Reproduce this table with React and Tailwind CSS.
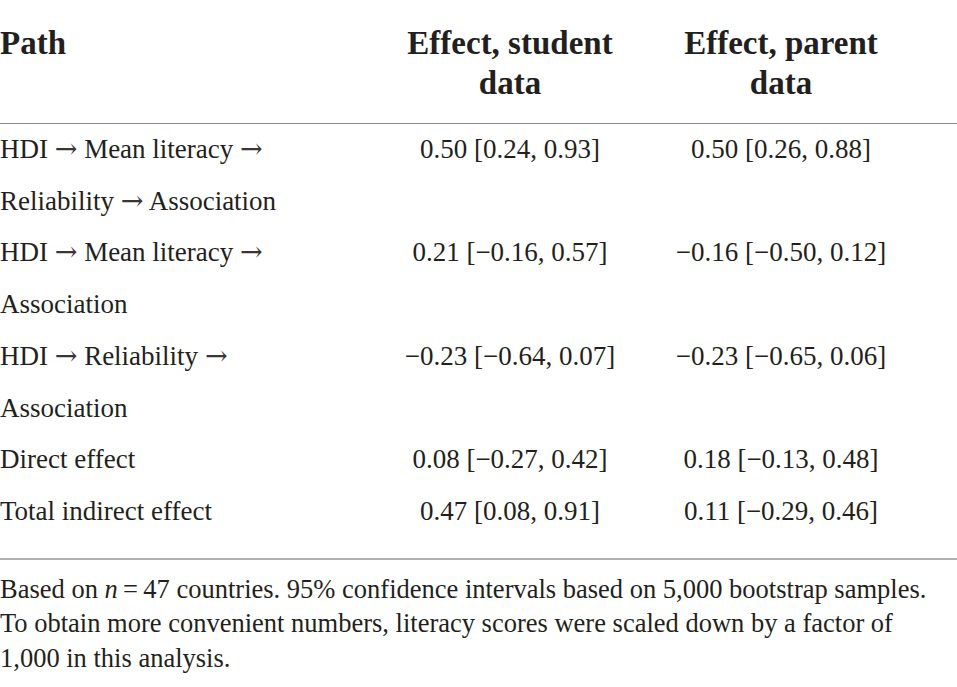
const rows = [
  { path: ['HDI → Mean literacy →', 'Reliability → Association'], student: '0.50 [0.24, 0.93]', parent: '0.50 [0.26, 0.88]' },
  { path: ['HDI → Mean literacy →', 'Association'], student: '0.21 [−0.16, 0.57]', parent: '−0.16 [−0.50, 0.12]' },
  { path: ['HDI → Reliability →', 'Association'], student: '−0.23 [−0.64, 0.07]', parent: '−0.23 [−0.65, 0.06]' },
  { path: ['Direct effect'], student: '0.08 [−0.27, 0.42]', parent: '0.18 [−0.13, 0.48]' },
  { path: ['Total indirect effect'], student: '0.47 [0.08, 0.91]', parent: '0.11 [−0.29, 0.46]' },
];

// arrows in Liberation Serif come out tiny, so give them a wider glyph
function PathLine({ text }) {
  const parts = text.split('→');
  return (
    <div className="whitespace-nowrap">
      {parts.map((p, i) => (
        <span key={i}>
          {p}
          {i < parts.length - 1 && (
            <span className="font-['DejaVu_Serif',serif] leading-[0px] text-[#3a3637]">→</span>
          )}
        </span>
      ))}
    </div>
  );
}

export default function App() {
  return (
    <div className="w-[957px] h-[687px] bg-white text-[#231f20] font-['Liberation_Serif',serif] overflow-hidden">
      <div className="grid grid-cols-[380px_260px_282px] pt-[23px] pb-[20px] text-[33px] leading-[40px] font-bold border-b border-[#8a8a8a]">
        <div>Path</div>
        <div className="text-center">Effect, student<br />data</div>
        <div className="text-center">Effect, parent<br />data</div>
      </div>

      <div className="pb-[20px] border-b-2 border-[#b0b0b0] text-[27px] leading-[51.7px]">
        {rows.map((r, i) => (
          <div key={i} className="grid grid-cols-[380px_260px_282px]">
            <div>
              {r.path.map((line, j) => (
                <PathLine key={j} text={line} />
              ))}
            </div>
            <div className="text-center">{r.student}</div>
            <div className="text-center">{r.parent}</div>
          </div>
        ))}
      </div>

      <p className="pt-[12px] text-[26.5px] leading-[34.5px] whitespace-nowrap">
        Based on <i>n</i>{'\u2009=\u2009'}47 countries. 95% confidence intervals based on 5,000 bootstrap samples.
        <br />
        To obtain more convenient numbers, literacy scores were scaled down by a factor of
        <br />
        1,000 in this analysis.
      </p>
    </div>
  );
}
